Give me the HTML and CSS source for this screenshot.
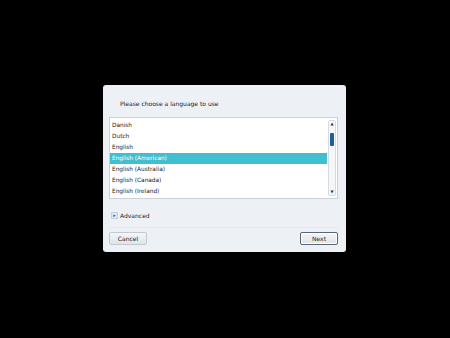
FILE: index.html
```html
<!DOCTYPE html>
<html lang="en">
<head>
  <meta charset="UTF-8" />
  <title>Choose language</title>
  <link rel="stylesheet" href="styles.css">
</head>
<body>
  <div class="dialog">
    <div class="title">Please choose a language to use</div>

    <div class="list">
      <ul class="items">
        <li>Danish</li>
        <li>Dutch</li>
        <li>English</li>
        <li class="selected">English (American)</li>
        <li>English (Australia)</li>
        <li>English (Canada)</li>
        <li>English (Ireland)</li>
      </ul>
      <div class="scrollbar">
        <span class="arrow">&#9650;</span>
        <div class="track"><div class="thumb"></div></div>
        <span class="arrow">&#9660;</span>
      </div>
    </div>

    <div class="advanced">
      <span class="expander">&#9656;</span>
      Advanced
    </div>

    <div class="buttons">
      <button class="btn">Cancel</button>
      <button class="btn default">Next</button>
    </div>
  </div>
</body>
</html>
```

FILE: styles.css
```css
body {
  margin: 0;
  padding: 0;
  background: #000;
  font-family: 'DejaVu Sans', Verdana, sans-serif;
  font-size: 6px;
  color: #222;
  width: 450px;
  height: 338px;
  display: flex;
  align-items: flex-start;
  justify-content: center;
}

.dialog {
  margin: 85px 0 0 -1px;
  width: 243px;
  height: 167px;
  box-sizing: border-box;
  background: #edf1f5;
  border-radius: 3px;
  padding: 0 8px 0 6px;
  display: flex;
  flex-direction: column;
}

.title {
  padding: 15px 0 0 11px;
  height: 17px;
  font-size: 6px;
}

.list {
  height: 82px;
  box-sizing: border-box;
  background: #fff;
  border: 1px solid #c9d1d9;
  display: flex;
}

.items {
  list-style: none;
  margin: 0;
  padding: 2px 0 0 0;
  flex: 1;
}

.items li {
  height: 11px;
  line-height: 11px;
  padding-left: 2px;
  font-size: 5.8px;
}

.items li.selected {
  background: #3fbfd0;
  color: #fff;
}

.scrollbar {
  width: 6px;
  margin: 2px 1px 2px 1px;
  display: flex;
  flex-direction: column;
  align-items: center;
  background: #f4f6f8;
  border: 1px solid #d5dbe1;
  border-radius: 2px;
}

.arrow {
  font-size: 4px;
  line-height: 6px;
  color: #333;
}

.track {
  flex: 1;
  width: 100%;
}

.thumb {
  margin: 6px auto 0;
  width: 4px;
  height: 13px;
  background: #1f5f94;
  border-radius: 1px;
}

.advanced {
  margin-top: 11px;
  padding-left: 2px;
  display: flex;
  align-items: center;
  gap: 2px;
  height: 10px;
  font-size: 6px;
}

.expander {
  width: 5px;
  height: 5px;
  background: #dce6f2;
  border: 1px solid #c3d1e2;
  font-size: 5px;
  line-height: 5px;
  text-align: center;
  color: #3b6bb0;
}

.buttons {
  margin-top: 7px;
  border-top: 1px solid #e2e7ec;
  padding-top: 4px;
  display: flex;
  justify-content: space-between;
}

.btn {
  width: 38px;
  height: 13px;
  padding: 0;
  font-family: inherit;
  font-size: 6px;
  color: #222;
  background: linear-gradient(#f4f6f8, #dfe4e9);
  border: 1px solid #c2c9d0;
  border-radius: 2px;
}

.btn.default {
  border: 1px solid #5b6670;
  box-shadow: inset 0 0 0 1px #fff;
}
```
